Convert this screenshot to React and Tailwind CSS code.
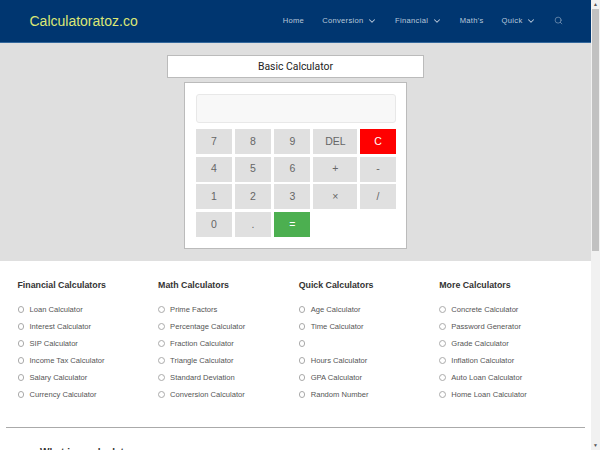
import { ChevronDown, Search } from 'lucide-react'

const NAV = [
  { label: 'Home', gap: 'mr-[18px]' },
  { label: 'Conversion', caret: true, gap: 'mr-[18px]' },
  { label: 'Financial', caret: true, gap: 'mr-[18px]' },
  { label: "Math's", gap: 'mr-[18px]' },
  { label: 'Quick', caret: true, gap: 'mr-[18px]' },
]

const KEYS = [
  ['7'], ['8'], ['9'], ['DEL'], ['C', 'bg-[#ff0000] text-white'],
  ['4'], ['5'], ['6'], ['+'], ['-'],
  ['1'], ['2'], ['3'], ['×'], ['/'],
  ['0'], ['.'], ['=', 'bg-[#4caf50] text-white'],
]

const COLUMNS = [
  { title: 'Financial Calculators', items: ['Loan Calculator', 'Interest Calculator', 'SIP Calculator', 'Income Tax Calculator', 'Salary Calculator', 'Currency Calculator'] },
  { title: 'Math Calculators', items: ['Prime Factors', 'Percentage Calculator', 'Fraction Calculator', 'Triangle Calculator', 'Standard Deviation', 'Conversion Calculator'] },
  { title: 'Quick Calculators', items: ['Age Calculator', 'Time Calculator', '', 'Hours Calculator', 'GPA Calculator', 'Random Number'] },
  { title: 'More Calculators', items: ['Concrete Calculator', 'Password Generator', 'Grade Calculator', 'Inflation Calculator', 'Auto Loan Calculator', 'Home Loan Calculator'] },
]

function LinkColumn({ title, items }) {
  return (
    <div className="w-[140.6px] shrink-0">
      <h3 className="text-[8.8px] leading-[14px] font-bold text-[#333]">{title}</h3>
      <ul className="mt-[9px]">
        {items.map((item, i) => (
          <li key={i} className="flex items-center h-[17px] text-[7.6px] text-[#555]">
            <span className="w-[6.5px] h-[6.5px] rounded-full border border-[#aaa] mr-[5.5px] shrink-0"></span>
            {item}
          </li>
        ))}
      </ul>
    </div>
  )
}

export default function App() {
  return (
    <div className="h-[450px] overflow-hidden flex font-['Liberation_Sans',Arial,sans-serif]">
      <div className="w-[591px] shrink-0 bg-white">
        {/* Header */}
        <header className="h-[43px] bg-[#003670] border-b border-[#34689c] flex items-center pl-[29.5px] pr-[28px]">
          <span className="text-[14px] text-[#dce775]">Calculatoratoz.co</span>
          <nav className="ml-auto flex items-center text-[7.6px] tracking-[0.3px] text-[#b9c9db]">
            {NAV.map(n => (
              <span key={n.label} className={`flex items-center ${n.gap}`}>
                {n.label}
                {n.caret && <ChevronDown size={10} strokeWidth={2.5} className="ml-[3.5px]" />}
              </span>
            ))}
            <Search size={9} strokeWidth={1.5} className="text-[#9fb4cc]" />
          </nav>
        </header>

        {/* Calculator band */}
        <section className="h-[218px] bg-[#dfdfdf] flex flex-col items-center pt-[12px]">
          <div className="w-[257px] h-[23px] shrink-0 bg-white border border-[#bbb] flex items-center justify-center text-[10.4px] text-[#222] font-['Roboto',sans-serif]">
            Basic Calculator
          </div>
          <div className="mt-[4px] w-[223px] h-[166.5px] shrink-0 bg-white border border-[#bbb] pt-[11px] pl-[11px]">
            <div className="w-[200px] h-[29px] bg-[#f8f8f8] border border-[#e8e8e8] rounded-[3px]"></div>
            <div className="mt-[6px] w-[200px] grid grid-cols-[35.7px_36.7px_36.3px_44px_35.7px] gap-x-[2.9px] gap-y-[2.7px]">
              {KEYS.map(([k, cls]) => (
                <div key={k} className={`h-[25px] text-[10.5px] flex items-center justify-center ${cls || 'bg-[#e0e0e0] text-[#666]'}`}>{k}</div>
              ))}
            </div>
          </div>
        </section>

        {/* Link columns */}
        <section className="flex pl-[17.5px] pt-[17px]">
          {COLUMNS.map(c => <LinkColumn key={c.title} {...c} />)}
        </section>

        <div className="mt-[24px] mx-[6px] border-t border-[#aaa]"></div>
        <p className="mt-[17px] pl-[40px] text-[10px] font-bold text-[#333]">What is a calculator</p>
      </div>

      {/* Scrollbar */}
      <div className="flex-1 bg-[#f1f1f1] flex flex-col items-center">
        <div className="h-[9px] text-[5px] leading-[9px] text-[#555]">▲</div>
        <div className="w-[6.5px] h-[241.5px] bg-[#c1c1c1]"></div>
        <div className="mt-auto h-[9px] text-[5px] leading-[9px] text-[#555]">▼</div>
      </div>
    </div>
  )
}
